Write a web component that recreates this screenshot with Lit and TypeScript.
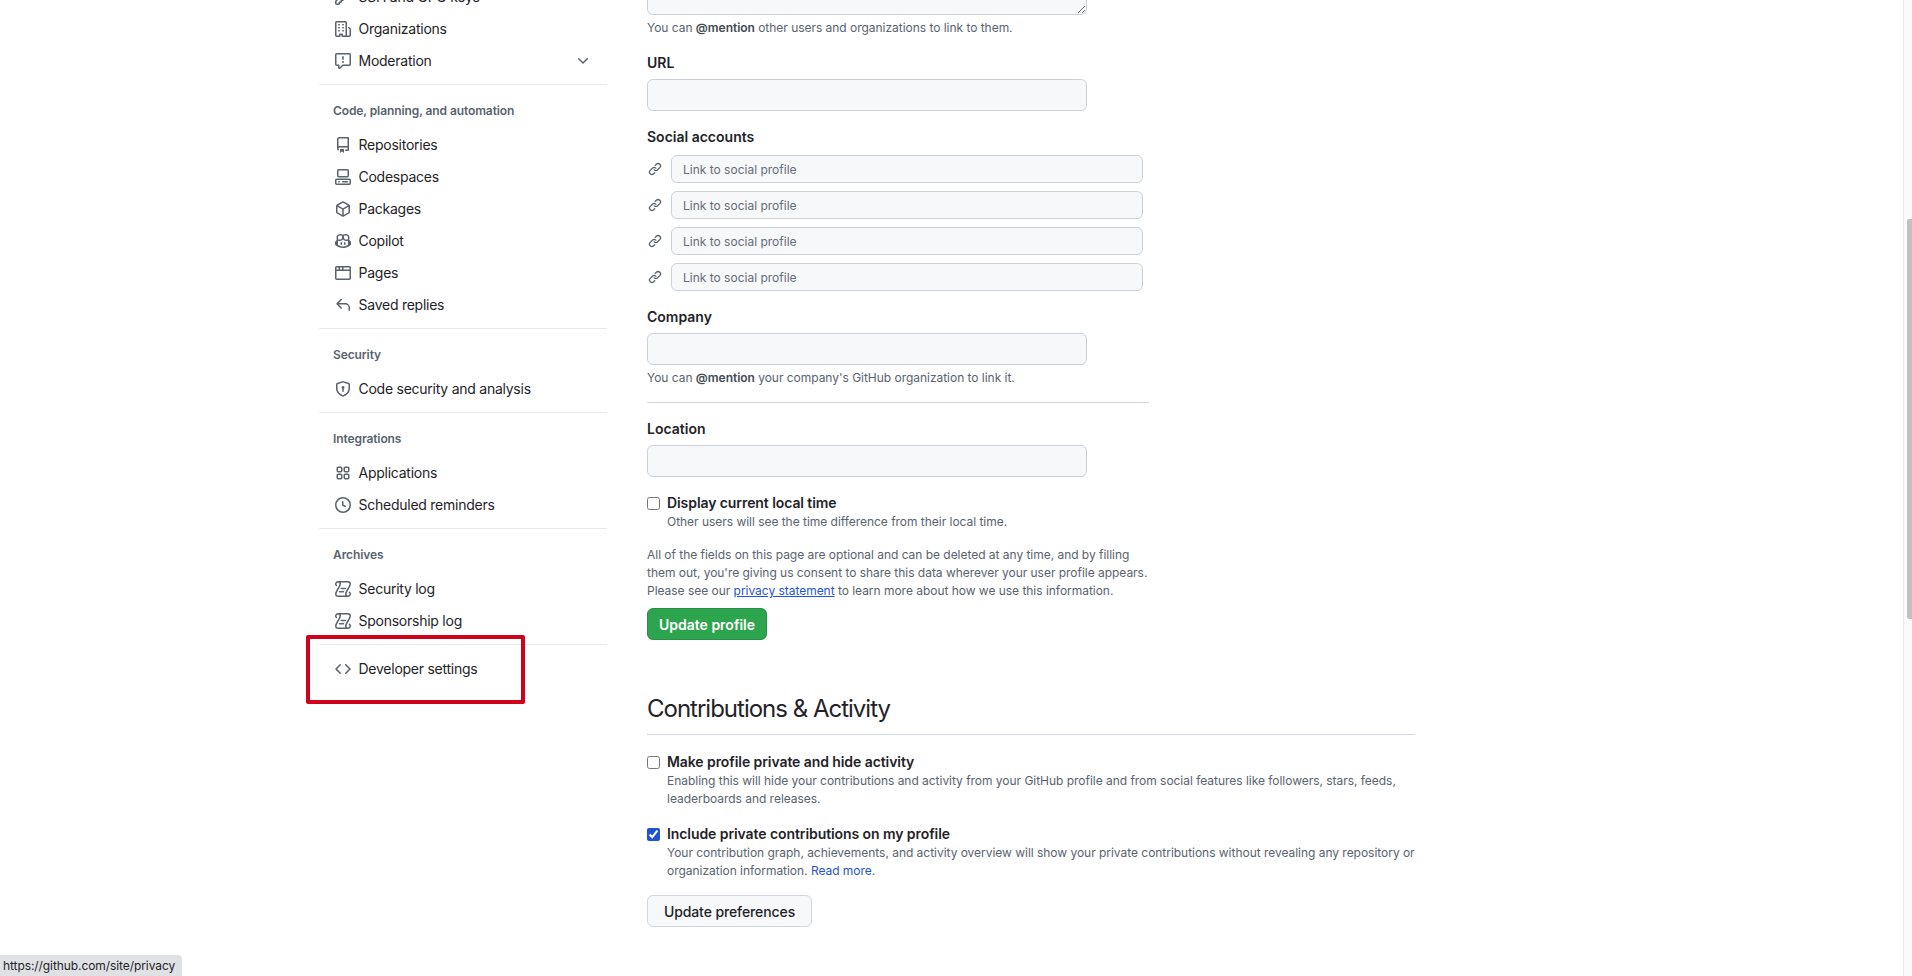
import { LitElement, html, css, svg } from 'lit';
import { customElement } from 'lit/decorators.js';

// octicon paths, 16x16 unless stated
const ICONS: Record<string, string> = {
  key: 'M10.5 0a5.499 5.499 0 1 1-1.288 10.848l-.932.932a.749.749 0 0 1-.53.22H7v.75a.749.749 0 0 1-.22.53l-.5.5a.749.749 0 0 1-.53.22H5v.75a.749.749 0 0 1-.22.53l-.5.5a.749.749 0 0 1-.53.22h-2A1.75 1.75 0 0 1 0 14.25v-2c0-.199.079-.389.22-.53l4.932-4.932A5.5 5.5 0 0 1 10.5 0Zm-4 5.5c-.001.431.069.86.205 1.269a.75.75 0 0 1-.181.768L1.5 12.56v1.69c0 .138.112.25.25.25h1.69l.06-.06v-1.19a.75.75 0 0 1 .75-.75h1.19l.06-.06v-1.19a.75.75 0 0 1 .75-.75h1.19l1.023-1.025a.75.75 0 0 1 .768-.18A4 4 0 1 0 6.5 5.5ZM11 6a1 1 0 1 1 0-2 1 1 0 0 1 0 2Z',
  organization: 'M1.75 16A1.75 1.75 0 0 1 0 14.25V1.75C0 .784.784 0 1.75 0h8.5C11.216 0 12 .784 12 1.75v12.5c0 .085-.006.168-.018.25h2.268a.25.25 0 0 0 .25-.25V8.285a.25.25 0 0 0-.111-.208l-1.055-.703a.749.749 0 1 1 .832-1.248l1.055.703c.487.325.779.871.779 1.456v5.965A1.75 1.75 0 0 1 14.25 16h-3.5a.766.766 0 0 1-.197-.026c-.099.017-.2.026-.303.026h-3a.75.75 0 0 1-.75-.75V14h-1v1.25a.75.75 0 0 1-.75.75Zm-.25-1.75c0 .138.112.25.25.25H4v-1.25a.75.75 0 0 1 .75-.75h2.5a.75.75 0 0 1 .75.75v1.25h2.25a.25.25 0 0 0 .25-.25V1.75a.25.25 0 0 0-.25-.25h-8.5a.25.25 0 0 0-.25.25ZM3.75 6h.5a.75.75 0 0 1 0 1.5h-.5a.75.75 0 0 1 0-1.5ZM3 3.75A.75.75 0 0 1 3.75 3h.5a.75.75 0 0 1 0 1.5h-.5A.75.75 0 0 1 3 3.75Zm4 3A.75.75 0 0 1 7.75 6h.5a.75.75 0 0 1 0 1.5h-.5A.75.75 0 0 1 7 6.75ZM7.75 3h.5a.75.75 0 0 1 0 1.5h-.5a.75.75 0 0 1 0-1.5ZM3 9.75A.75.75 0 0 1 3.75 9h.5a.75.75 0 0 1 0 1.5h-.5A.75.75 0 0 1 3 9.75ZM7.75 9h.5a.75.75 0 0 1 0 1.5h-.5a.75.75 0 0 1 0-1.5Z',
  report: 'M0 1.75C0 .784.784 0 1.75 0h12.5C15.216 0 16 .784 16 1.75v9.5A1.75 1.75 0 0 1 14.25 13H8.06l-2.573 2.573A1.458 1.458 0 0 1 3 14.543V13H1.75A1.75 1.75 0 0 1 0 11.25Zm1.75-.25a.25.25 0 0 0-.25.25v9.5c0 .138.112.25.25.25h2a.75.75 0 0 1 .75.75v2.19l2.72-2.72a.749.749 0 0 1 .53-.22h6.5a.25.25 0 0 0 .25-.25v-9.5a.25.25 0 0 0-.25-.25Zm7 2.25v2.5a.75.75 0 0 1-1.5 0v-2.5a.75.75 0 0 1 1.5 0ZM9 9a1 1 0 1 1-2 0 1 1 0 0 1 2 0Z',
  repo: 'M2 2.5A2.5 2.5 0 0 1 4.5 0h8.75a.75.75 0 0 1 .75.75v12.5a.75.75 0 0 1-.75.75h-2.5a.75.75 0 0 1 0-1.5h1.75v-2h-8a1 1 0 0 0-.714 1.7.75.75 0 1 1-1.072 1.05A2.495 2.495 0 0 1 2 11.5Zm10.5-1h-8a1 1 0 0 0-1 1v6.708A2.486 2.486 0 0 1 4.5 9h8ZM5 12.25a.25.25 0 0 1 .25-.25h3.5a.25.25 0 0 1 .25.25v3.25a.25.25 0 0 1-.4.2l-1.45-1.087a.249.249 0 0 0-.3 0L5.4 15.7a.25.25 0 0 1-.4-.2Z',
  codespaces: 'M0 11.25c0-.966.784-1.75 1.75-1.75h12.5c.966 0 1.75.784 1.75 1.75v3A1.75 1.75 0 0 1 14.25 16H1.75A1.75 1.75 0 0 1 0 14.25Zm2-9.5C2 .784 2.784 0 3.75 0h8.5C13.216 0 14 .784 14 1.75v5a1.75 1.75 0 0 1-1.75 1.75h-8.5A1.75 1.75 0 0 1 2 6.75Zm1.75-.25a.25.25 0 0 0-.25.25v5c0 .138.112.25.25.25h8.5a.25.25 0 0 0 .25-.25v-5a.25.25 0 0 0-.25-.25Zm-2 9.5a.25.25 0 0 0-.25.25v3c0 .138.112.25.25.25h12.5a.25.25 0 0 0 .25-.25v-3a.25.25 0 0 0-.25-.25ZM7 12.75a.75.75 0 0 1 .75-.75h4.5a.75.75 0 0 1 0 1.5h-4.5a.75.75 0 0 1-.75-.75Zm-4 0a.75.75 0 0 1 .75-.75h.5a.75.75 0 0 1 0 1.5h-.5a.75.75 0 0 1-.75-.75Z',
  package: 'm8.878.392 5.25 3.045c.54.314.872.89.872 1.514v6.098a1.75 1.75 0 0 1-.872 1.514l-5.25 3.045a1.75 1.75 0 0 1-1.756 0l-5.25-3.045A1.75 1.75 0 0 1 1 11.049V4.951c0-.624.332-1.201.872-1.514L7.122.392a1.75 1.75 0 0 1 1.756 0ZM7.875 1.69l-4.63 2.685L8 7.133l4.755-2.758-4.63-2.685a.248.248 0 0 0-.25 0ZM2.5 5.677v5.372c0 .09.047.171.125.216l4.625 2.683V8.432Zm6.25 8.271 4.625-2.683a.25.25 0 0 0 .125-.216V5.677L8.75 8.432Z',
  copilot: 'M7.998 15.035c-4.562 0-7.873-2.914-7.998-3.749V9.338c.085-.628.677-1.686 1.588-2.065.013-.07.024-.143.036-.218.029-.183.06-.384.126-.612-.201-.508-.254-1.084-.254-1.656 0-.87.128-1.769.693-2.484.579-.733 1.494-1.124 2.724-1.261 1.206-.134 2.262.034 2.944.765.05.053.096.108.139.165.044-.057.094-.112.143-.165.682-.731 1.738-.899 2.944-.765 1.23.137 2.145.528 2.724 1.261.566.715.693 1.614.693 2.484 0 .572-.053 1.148-.254 1.656.066.228.098.429.126.612.012.076.024.148.037.218.924.385 1.522 1.471 1.591 2.095v1.872c0 .766-3.351 3.795-8.002 3.795Zm0-1.485c2.28 0 4.584-1.11 5.002-1.433V7.862l-.023-.116c-.49.21-1.075.291-1.727.291-1.146 0-2.059-.327-2.71-.991A3.222 3.222 0 0 1 8 6.303a3.24 3.24 0 0 1-.544.743c-.65.664-1.563.991-2.71.991-.652 0-1.236-.081-1.727-.291l-.023.116v4.255c.419.323 2.722 1.433 5.002 1.433ZM6.762 2.83c-.193-.206-.637-.413-1.682-.297-1.019.113-1.479.404-1.713.7-.247.312-.369.789-.369 1.554 0 .793.129 1.171.308 1.371.162.181.519.379 1.442.379.853 0 1.339-.235 1.638-.54.315-.322.527-.827.617-1.553.117-.935-.037-1.395-.241-1.614Zm4.155-.297c-1.044-.116-1.488.091-1.681.297-.204.219-.359.679-.242 1.614.091.726.303 1.231.618 1.553.299.305.784.54 1.638.54.922 0 1.28-.198 1.442-.379.179-.2.308-.578.308-1.371 0-.765-.123-1.242-.37-1.554-.233-.296-.693-.587-1.713-.7ZM6.25 9.037a.75.75 0 0 1 .75.75v1.501a.75.75 0 0 1-1.5 0V9.787a.75.75 0 0 1 .75-.75Zm4.25.75v1.501a.75.75 0 0 1-1.5 0V9.787a.75.75 0 0 1 1.5 0Z',
  browser: 'M0 2.75C0 1.784.784 1 1.75 1h12.5c.966 0 1.75.784 1.75 1.75v10.5A1.75 1.75 0 0 1 14.25 15H1.75A1.75 1.75 0 0 1 0 13.25ZM14.5 6h-13v7.25c0 .138.112.25.25.25h12.5a.25.25 0 0 0 .25-.25Zm-6-3.5v2h6V2.75a.25.25 0 0 0-.25-.25ZM5 2.5v2h2v-2Zm-3.25 0a.25.25 0 0 0-.25.25V4.5h2v-2Z',
  reply: 'M6.78 1.97a.75.75 0 0 1 0 1.06L3.81 6h6.44A4.75 4.75 0 0 1 15 10.75v2.5a.75.75 0 0 1-1.5 0v-2.5a3.25 3.25 0 0 0-3.25-3.25H3.81l2.97 2.97a.749.749 0 0 1-.326 1.275.749.749 0 0 1-.734-.215L1.47 7.28a.75.75 0 0 1 0-1.06l4.25-4.25a.75.75 0 0 1 1.06 0Z',
  shield: 'm8.533.133 5.25 1.68A1.75 1.75 0 0 1 15 3.48V7c0 1.566-.32 3.182-1.303 4.682-.983 1.498-2.585 2.813-5.032 3.855a1.697 1.697 0 0 1-1.33 0c-2.447-1.042-4.049-2.357-5.032-3.855C1.32 10.182 1 8.566 1 7V3.48a1.75 1.75 0 0 1 1.217-1.667l5.25-1.68a1.748 1.748 0 0 1 1.066 0Zm-.61 1.429.001.001-5.25 1.68a.251.251 0 0 0-.174.237V7c0 1.36.275 2.666 1.057 3.859.784 1.194 2.121 2.342 4.366 3.298a.196.196 0 0 0 .154 0c2.245-.957 3.582-2.103 4.366-3.297C13.225 9.666 13.5 8.358 13.5 7V3.48a.25.25 0 0 0-.174-.238l-5.25-1.68a.25.25 0 0 0-.153 0ZM9.5 6.5c0 .536-.286 1.032-.75 1.3v2.45a.75.75 0 0 1-1.5 0V7.8A1.5 1.5 0 1 1 9.5 6.5Z',
  apps: 'M1.5 3.25c0-.966.784-1.75 1.75-1.75h2.5c.966 0 1.75.784 1.75 1.75v2.5A1.75 1.75 0 0 1 5.75 7.5h-2.5A1.75 1.75 0 0 1 1.5 5.75Zm7 0c0-.966.784-1.75 1.75-1.75h2.5c.966 0 1.75.784 1.75 1.75v2.5a1.75 1.75 0 0 1-1.75 1.75h-2.5A1.75 1.75 0 0 1 8.5 5.75Zm-7 7c0-.966.784-1.75 1.75-1.75h2.5c.966 0 1.75.784 1.75 1.75v2.5a1.75 1.75 0 0 1-1.75 1.75h-2.5a1.75 1.75 0 0 1-1.75-1.75Zm7 0c0-.966.784-1.75 1.75-1.75h2.5c.966 0 1.75.784 1.75 1.75v2.5a1.75 1.75 0 0 1-1.75 1.75h-2.5a1.75 1.75 0 0 1-1.75-1.75ZM3.25 3a.25.25 0 0 0-.25.25v2.5c0 .138.112.25.25.25h2.5A.25.25 0 0 0 6 5.75v-2.5A.25.25 0 0 0 5.75 3Zm7 0a.25.25 0 0 0-.25.25v2.5c0 .138.112.25.25.25h2.5a.25.25 0 0 0 .25-.25v-2.5a.25.25 0 0 0-.25-.25Zm-7 7a.25.25 0 0 0-.25.25v2.5c0 .138.112.25.25.25h2.5a.25.25 0 0 0 .25-.25v-2.5a.25.25 0 0 0-.25-.25Zm7 0a.25.25 0 0 0-.25.25v2.5c0 .138.112.25.25.25h2.5a.25.25 0 0 0 .25-.25v-2.5a.25.25 0 0 0-.25-.25Z',
  clock: 'M8 0a8 8 0 1 1 0 16A8 8 0 0 1 8 0ZM1.5 8a6.5 6.5 0 1 0 13 0 6.5 6.5 0 0 0-13 0Zm7-3.25v2.992l2.028.812a.75.75 0 0 1-.557 1.392l-2.5-1A.751.751 0 0 1 7 8.25v-3.5a.75.75 0 0 1 1.5 0Z',
  code: 'm11.28 3.22 4.25 4.25a.75.75 0 0 1 0 1.06l-4.25 4.25a.749.749 0 0 1-1.275-.326.749.749 0 0 1 .215-.734L13.94 8l-3.72-3.72a.749.749 0 0 1 .326-1.275.749.749 0 0 1 .734.215Zm-6.56 0a.751.751 0 0 1 1.042.018.751.751 0 0 1 .018 1.042L2.06 8l3.72 3.72a.749.749 0 0 1-.326 1.275.749.749 0 0 1-.734-.215L.47 8.53a.75.75 0 0 1 0-1.06Z',
  link: 'm7.775 3.275 1.25-1.25a3.5 3.5 0 1 1 4.95 4.95l-2.5 2.5a3.5 3.5 0 0 1-4.95 0 .751.751 0 0 1 .018-1.042.751.751 0 0 1 1.042-.018 1.998 1.998 0 0 0 2.83 0l2.5-2.5a2.002 2.002 0 0 0-2.83-2.83l-1.25 1.25a.751.751 0 0 1-1.042-.018.751.751 0 0 1-.018-1.042Zm-4.69 9.64a1.998 1.998 0 0 0 2.83 0l1.25-1.25a.751.751 0 0 1 1.042.018.751.751 0 0 1 .018 1.042l-1.25 1.25a3.5 3.5 0 1 1-4.95-4.95l2.5-2.5a3.5 3.5 0 0 1 4.95 0 .751.751 0 0 1-.018 1.042.751.751 0 0 1-1.042.018 1.998 1.998 0 0 0-2.83 0l-2.5 2.5a1.998 1.998 0 0 0 0 2.83Z',
  chevron: 'M12.78 5.22a.749.749 0 0 1 0 1.06l-4.25 4.25a.749.749 0 0 1-1.06 0L3.22 6.28a.749.749 0 1 1 1.06-1.06L8 8.939l3.72-3.719a.749.749 0 0 1 1.06 0Z',
};

function icon(name: string, size = 16) {
  // the log scroll is drawn with strokes, the rest are filled octicons
  if (name === 'log') {
    return html`<svg class="ic" width=${size} height=${size} viewBox="0 0 16 16" fill="none" stroke="currentColor" stroke-width="1.5" stroke-linecap="round">
      ${svg`<path d="M3 .75h10A2.25 2.25 0 0 1 15.25 3c0 3.2-4.5 6.8-4.5 10A2.25 2.25 0 0 0 13 15.25H3A2.25 2.25 0 0 1 .75 13c0-3.2 4.5-6.8 4.5-10A2.25 2.25 0 0 0 3 .75 2.25 2.25 0 0 0 .75 3c0 .6.25 1.1.6 1.5M13 15.25a2.25 2.25 0 0 0 1.4-4M6.25 7.5h4M4.5 10.75h4"/>`}
    </svg>`;
  }
  return html`<svg class="ic" width=${size} height=${size} viewBox="0 0 16 16" fill="currentColor">${svg`<path d=${ICONS[name]}/>`}</svg>`;
}

type NavGroup = { title?: string; items: { icon: string; label: string; chevron?: boolean }[] };

const NAV: NavGroup[] = [
  {
    items: [
      { icon: 'key', label: 'SSH and GPG keys' },
      { icon: 'organization', label: 'Organizations' },
      { icon: 'report', label: 'Moderation', chevron: true },
    ],
  },
  {
    title: 'Code, planning, and automation',
    items: [
      { icon: 'repo', label: 'Repositories' },
      { icon: 'codespaces', label: 'Codespaces' },
      { icon: 'package', label: 'Packages' },
      { icon: 'copilot', label: 'Copilot' },
      { icon: 'browser', label: 'Pages' },
      { icon: 'reply', label: 'Saved replies' },
    ],
  },
  { title: 'Security', items: [{ icon: 'shield', label: 'Code security and analysis' }] },
  {
    title: 'Integrations',
    items: [
      { icon: 'apps', label: 'Applications' },
      { icon: 'clock', label: 'Scheduled reminders' },
    ],
  },
  {
    title: 'Archives',
    items: [
      { icon: 'log', label: 'Security log' },
      { icon: 'log', label: 'Sponsorship log' },
    ],
  },
  { items: [{ icon: 'code', label: 'Developer settings' }] },
];

@customElement('app-root')
export class AppRoot extends LitElement {
  static styles = css`
    :host {
      display: flex;
      position: relative;
      width: 1912px;
      height: 976px;
      overflow: hidden;
      background: #fff;
      color: #1f2328;
      font-family: Inter, 'Liberation Sans', sans-serif;
      font-size: 14px;
    }
    .ic {
      flex: none;
      display: block;
    }
    .sidebar {
      flex: none;
      width: 288px;
      margin: -19px 0 0 319px;
    }
    .group {
      padding-bottom: 7px;
      border-bottom: 1px solid #e6e8ec;
    }
    .group:last-child {
      border-bottom: none;
    }
    .group-title {
      height: 18px;
      line-height: 18px;
      margin: 17px 0 9px 14px;
      font-size: 12px;
      font-weight: 600;
      letter-spacing: -0.1px;
      color: #59636e;
    }
    .row {
      display: flex;
      align-items: center;
      gap: 7.5px;
      height: 32px;
      padding: 0 16px;
      letter-spacing: -0.25px;
    }
    .row .ic {
      color: #59636e;
    }
    .row .grow {
      flex: 1;
      padding-bottom: 2px;
    }
    .group:last-child .row {
      margin-top: 8px;
    }
    .main {
      flex: none;
      width: 768px;
      margin: -85px 0 0 40px;
    }
    textarea,
    input.text {
      display: block;
      box-sizing: border-box;
      margin: 0;
      padding: 0 12px;
      background: #f6f8fa;
      border: 1px solid #ccd2da;
      border-radius: 6px;
      outline: none;
      font: inherit;
    }
    textarea {
      width: 440px;
      height: 100px;
      resize: vertical;
    }
    input.text {
      width: 440px;
      height: 32px;
    }
    input.social {
      flex: 1;
      height: 28px;
      width: auto;
      min-width: 0;
      padding-left: 11px;
      font-size: 12px;
    }
    input.social::placeholder {
      color: #656d76;
      opacity: 1;
    }
    .note {
      margin-top: 4px;
      font-size: 12px;
      line-height: 18px;
      letter-spacing: -0.03px;
      white-space: nowrap;
      color: #59636e;
    }
    .note b {
      font-weight: 600;
      color: #424a53;
    }
    .label {
      margin: 16px 0 6px;
      line-height: 20px;
      font-weight: 600;
    }
    .label.tight {
      margin-bottom: 0;
    }
    .socials {
      display: flex;
      flex-direction: column;
      gap: 8px;
      width: 496px;
      margin-top: 8px;
    }
    .social-row {
      display: flex;
      align-items: center;
      gap: 9px;
      padding-left: 1px;
    }
    .social-row .ic {
      color: #59636e;
    }
    .sep {
      width: 502px;
      height: 1px;
      margin: 15px 0 16px;
      background: #d0d7de;
    }
    .sep + .label {
      margin-top: 0;
    }
    .check {
      display: flex;
      align-items: center;
      gap: 7px;
      margin-top: 16px;
      line-height: 20px;
      font-weight: 600;
      letter-spacing: -0.08px;
    }
    .check input {
      flex: none;
      width: 13px;
      height: 13px;
      margin: 0;
      accent-color: #1f54d6;
    }
    .check + .note {
      margin: 0 0 0 20px;
    }
    .blurb {
      margin: 15px 0 8px;
      font-size: 12px;
      line-height: 18px;
      letter-spacing: -0.03px;
      white-space: nowrap;
      color: #59636e;
    }
    a {
      color: #1f54d6;
    }
    .note a {
      text-decoration: none;
    }
    .btn {
      display: block;
      box-sizing: border-box;
      height: 32px;
      margin: 0;
      border-radius: 6px;
      font: inherit;
      font-weight: 600;
    }
    .btn.primary {
      width: 120px;
      background: #2da44e;
      border: 1px solid #298e46;
      color: #fff;
    }
    .btn.plain {
      width: 165px;
      margin-top: 15px;
      background: #f6f8fa;
      border: 1px solid #d0d7de;
      color: #1f2328;
      font-weight: 500;
      letter-spacing: -0.1px;
    }
    h2 {
      margin: 54px 0 0;
      padding-bottom: 10px;
      border-bottom: 1px solid #d0d7de;
      font-size: 24px;
      line-height: 30px;
      font-weight: 400;
      letter-spacing: -1px;
    }
    h2 + .check {
      margin-top: 17px;
    }
    .spacer {
      flex: 1;
    }
    .scrollbar {
      flex: none;
      box-sizing: border-box;
      width: 9px;
      height: 976px;
      padding: 219px 0 0 3px;
      background: #fafafa;
      border-left: 1px solid #e8e8e8;
    }
    .thumb {
      height: 400px;
      background: #c1c1c1;
      border-radius: 2px 0 0 2px;
    }
    .status {
      position: absolute;
      left: 0;
      bottom: 0;
      padding: 0 7px 0 3px;
      height: 21px;
      line-height: 21px;
      background: #e0e1e5;
      border-top-right-radius: 4px;
      font-size: 12px;
      letter-spacing: -0.08px;
      color: #1f2328;
    }
    .callout {
      position: absolute;
      left: 306px;
      top: 635px;
      box-sizing: border-box;
      width: 219px;
      height: 69px;
      border: 4px solid #d0021b;
      border-radius: 2px;
      pointer-events: none;
    }
  `;

  private renderGroup(group: NavGroup) {
    return html`<div class="group">
      ${group.title ? html`<div class="group-title">${group.title}</div>` : ''}
      ${group.items.map(
        (item) => html`<div class="row">
          ${icon(item.icon)}
          <span class="grow">${item.label}</span>
          ${item.chevron ? icon('chevron') : ''}
        </div>`,
      )}
    </div>`;
  }

  render() {
    return html`
      <nav class="sidebar">${NAV.map((g) => this.renderGroup(g))}</nav>
      <main class="main">
        <textarea></textarea>
        <div class="note">You can <b>@mention</b> other users and organizations to link to them.</div>

        <div class="label">URL</div>
        <input class="text" />

        <div class="label tight">Social accounts</div>
        <div class="socials">
          ${[0, 1, 2, 3].map(
            () => html`<div class="social-row">
              ${icon('link', 14)}
              <input class="text social" placeholder="Link to social profile" />
            </div>`,
          )}
        </div>

        <div class="label">Company</div>
        <input class="text" />
        <div class="note">You can <b>@mention</b> your company's GitHub organization to link it.</div>
        <div class="sep"></div>

        <div class="label">Location</div>
        <input class="text" />

        <label class="check"><input type="checkbox" />Display current local time</label>
        <div class="note">Other users will see the time difference from their local time.</div>

        <p class="blurb">
          All of the fields on this page are optional and can be deleted at any time, and by filling<br />
          them out, you're giving us consent to share this data wherever your user profile appears.<br />
          Please see our <a href="#">privacy statement</a> to learn more about how we use this information.
        </p>
        <button class="btn primary">Update profile</button>

        <h2>Contributions &amp; Activity</h2>
        <label class="check"><input type="checkbox" />Make profile private and hide activity</label>
        <div class="note">
          Enabling this will hide your contributions and activity from your GitHub profile and from social features like followers, stars, feeds,<br />
          leaderboards and releases.
        </div>
        <label class="check"><input type="checkbox" checked />Include private contributions on my profile</label>
        <div class="note">
          Your contribution graph, achievements, and activity overview will show your private contributions without revealing any repository or<br />
          organization information. <a href="#">Read more</a>.
        </div>
        <button class="btn plain">Update preferences</button>
      </main>
      <div class="spacer"></div>
      <div class="scrollbar"><div class="thumb"></div></div>
      <div class="status">https://github.com/site/privacy</div>
      <div class="callout"></div>
    `;
  }
}
